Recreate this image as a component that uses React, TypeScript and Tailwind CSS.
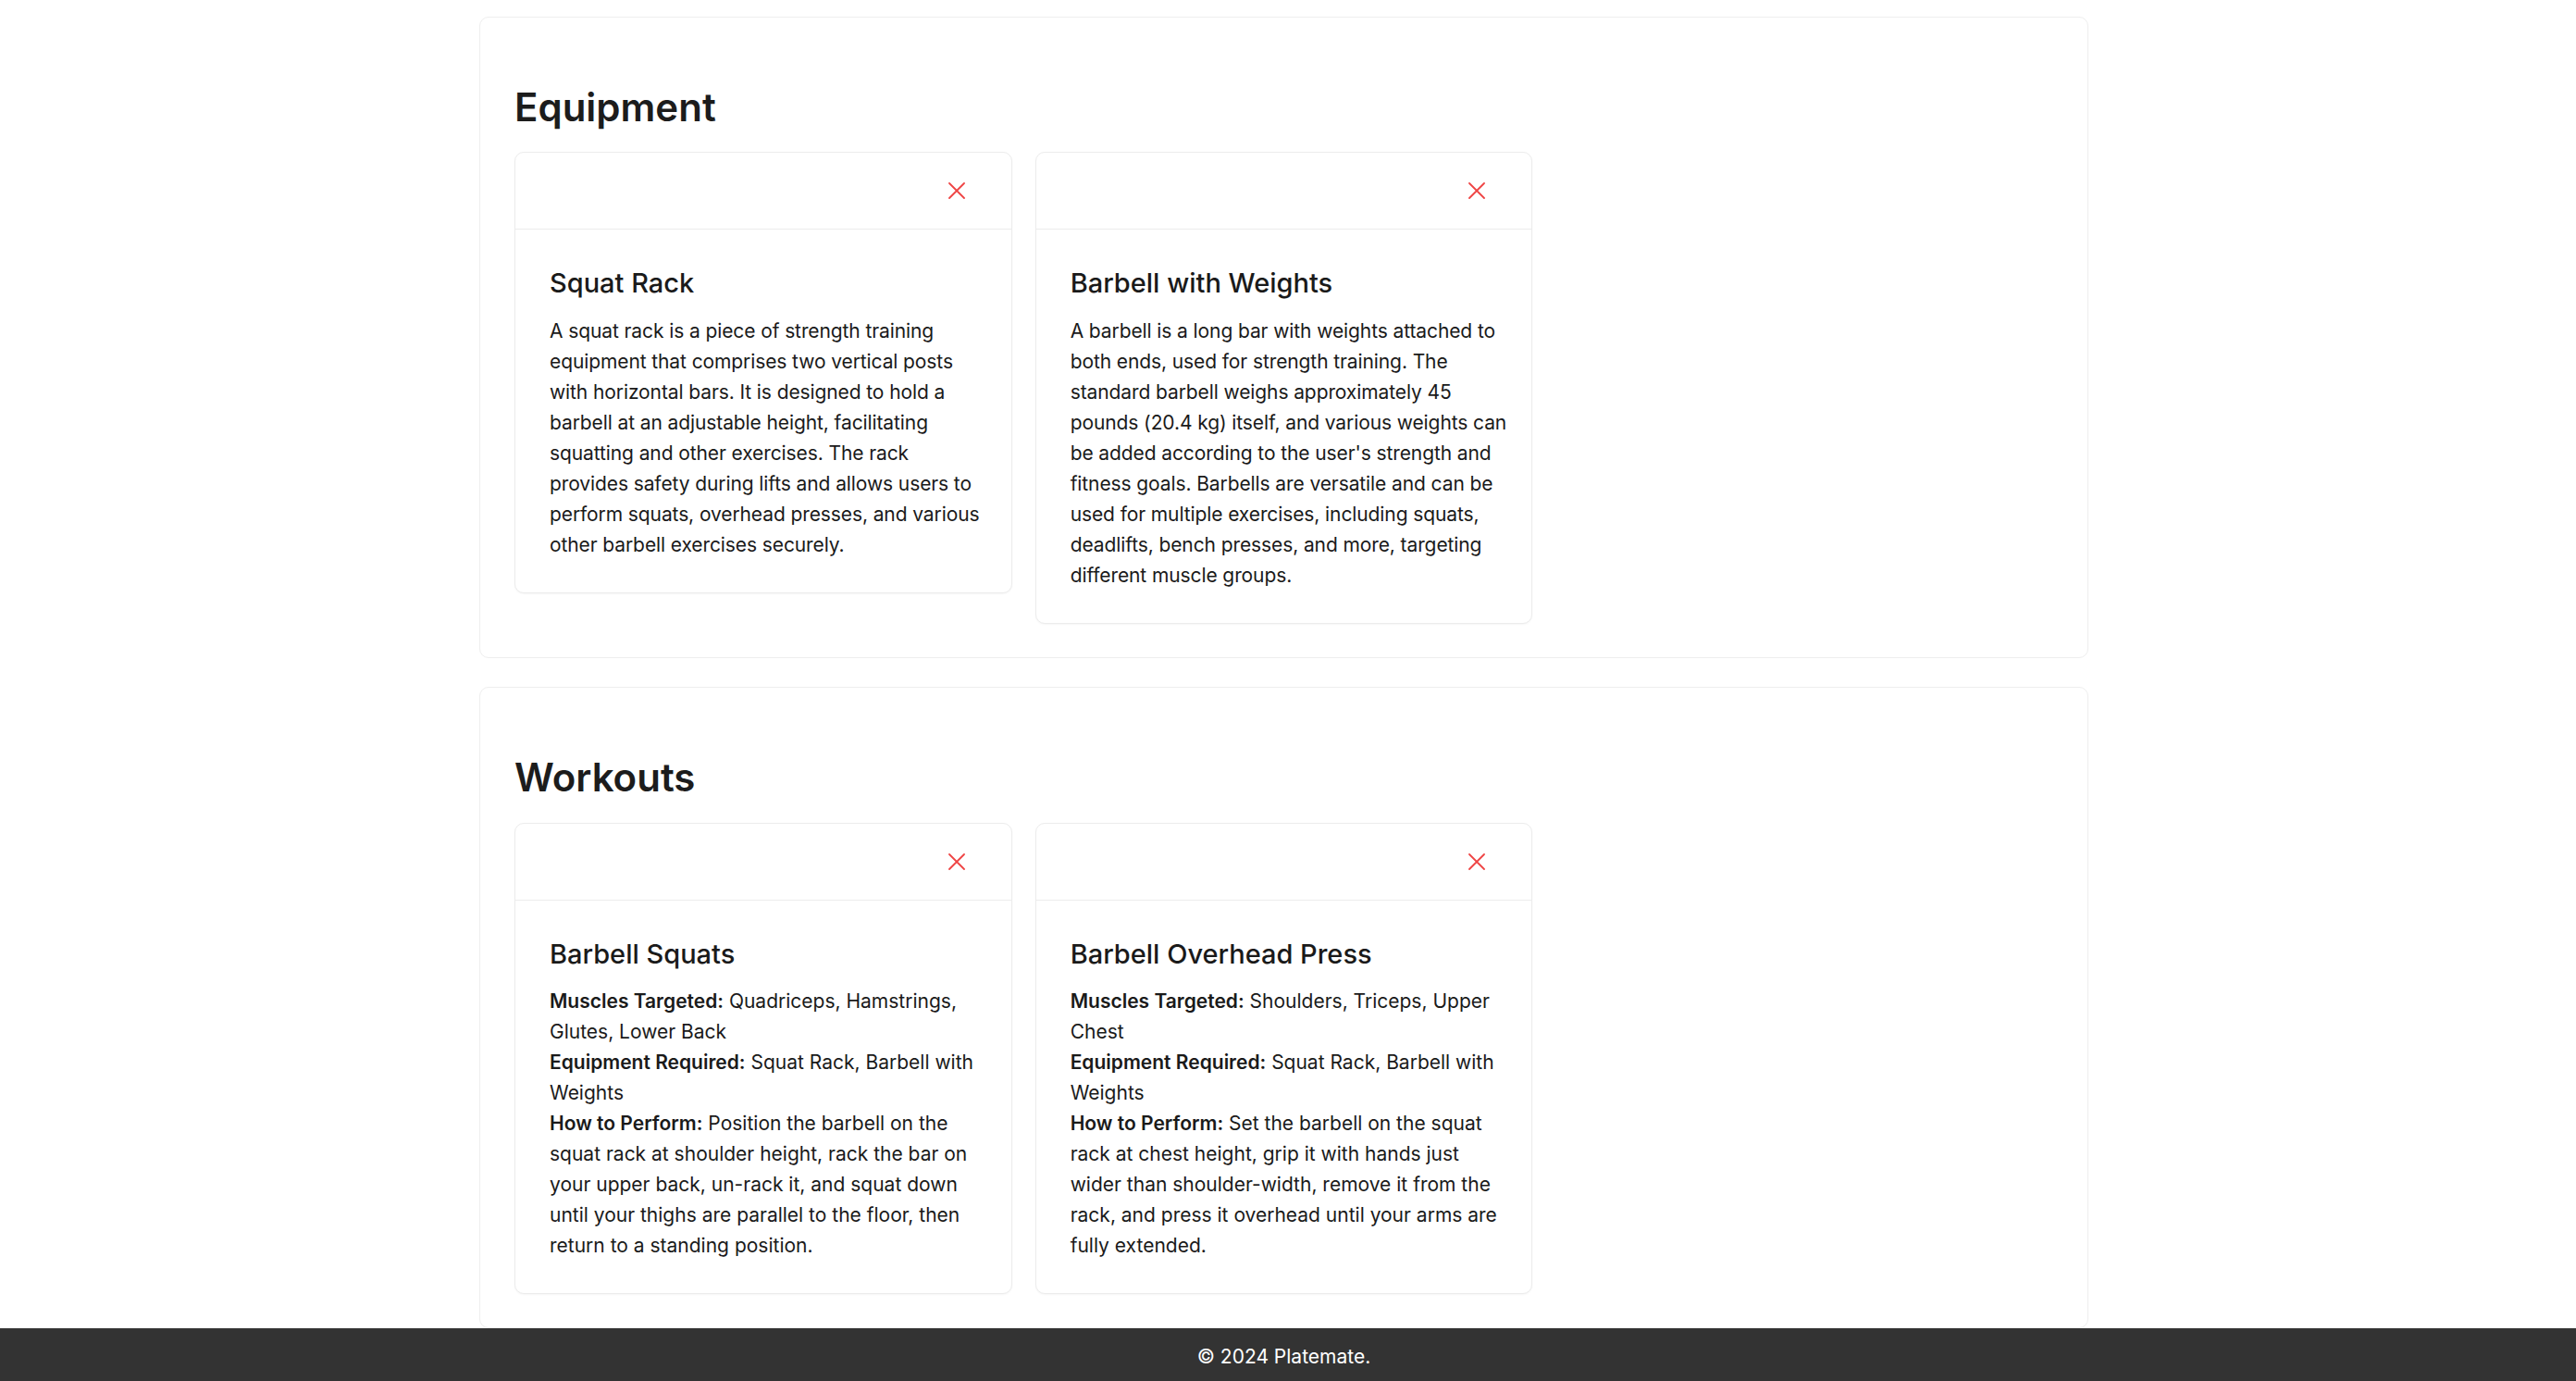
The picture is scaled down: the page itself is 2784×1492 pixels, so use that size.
import { Fragment } from 'react';

type Item = {
  title: string;
  lines?: string[];
  details?: { label: string; text: string }[];
};

// line breaks follow the reference layout
const equipment: Item[] = [
  {
    title: 'Squat Rack',
    lines: [
      'A squat rack is a piece of strength training',
      'equipment that comprises two vertical posts',
      'with horizontal bars. It is designed to hold a',
      'barbell at an adjustable height, facilitating',
      'squatting and other exercises. The rack',
      'provides safety during lifts and allows users to',
      'perform squats, overhead presses, and various',
      'other barbell exercises securely.',
    ],
  },
  {
    title: 'Barbell with Weights',
    lines: [
      'A barbell is a long bar with weights attached to',
      'both ends, used for strength training. The',
      'standard barbell weighs approximately 45',
      'pounds (20.4 kg) itself, and various weights can',
      "be added according to the user's strength and",
      'fitness goals. Barbells are versatile and can be',
      'used for multiple exercises, including squats,',
      'deadlifts, bench presses, and more, targeting',
      'different muscle groups.',
    ],
  },
];

const workouts: Item[] = [
  {
    title: 'Barbell Squats',
    details: [
      { label: 'Muscles Targeted:', text: 'Quadriceps, Hamstrings, Glutes, Lower Back' },
      { label: 'Equipment Required:', text: 'Squat Rack, Barbell with Weights' },
      {
        label: 'How to Perform:',
        text: 'Position the barbell on the squat rack at shoulder height, rack the bar on your upper back, un-rack it, and squat down until your thighs are parallel to the floor, then return to a standing position.',
      },
    ],
  },
  {
    title: 'Barbell Overhead Press',
    details: [
      { label: 'Muscles Targeted:', text: 'Shoulders, Triceps, Upper Chest' },
      { label: 'Equipment Required:', text: 'Squat Rack, Barbell with Weights' },
      {
        label: 'How to Perform:',
        text: 'Set the barbell on the squat rack at chest height, grip it with hands just wider than shoulder-width, remove it from the rack, and press it overhead until your arms are fully extended.',
      },
    ],
  },
];

function CloseIcon() {
  return (
    <svg width="18" height="18" viewBox="0 0 18 18" fill="none" stroke="#ef4444" strokeWidth="1.8" strokeLinecap="round">
      <path d="M1 1 17 17M17 1 1 17" />
    </svg>
  );
}

function ItemCard({ item }: { item: Item }) {
  return (
    <div className="bg-white border border-[#ececec] rounded-[10px] shadow-[0_1px_2px_rgba(0,0,0,0.04)]">
      <div className="h-[83px] flex items-center justify-end pr-[50px] border-b border-[#ececec]">
        <button className="flex items-center justify-center">
          <CloseIcon />
        </button>
      </div>
      <div className="pt-[41px] px-[37px] pb-[35px]">
        <h3 className="text-[29px] leading-[1.2] font-medium text-[#1a1a1a] mb-[17px]">{item.title}</h3>
        {item.lines && (
          <p className="text-[21px] leading-[33px] text-[#1a1a1a] tracking-[-0.1px]">
            {item.lines.map((line) => (
              <span key={line} className="block whitespace-nowrap">
                {line}
              </span>
            ))}
          </p>
        )}
        {item.details && (
          <p className="text-[21px] leading-[33px] text-[#1a1a1a]">
            {item.details.map((d, i) => (
              <Fragment key={d.label}>
                {i > 0 && <br />}
                <span className="font-semibold">{d.label}</span> {d.text}
              </Fragment>
            ))}
          </p>
        )}
      </div>
    </div>
  );
}

function Section({ title, items }: { title: string; items: Item[] }) {
  return (
    <section className="border border-[#eeeeee] rounded-[10px] bg-white pt-[72px] px-[37px] pb-[36px]">
      <h2 className="text-[42px] leading-[1.2] font-semibold text-[#1c1c1c] mb-[23px]">{title}</h2>
      <div className="grid grid-cols-3 gap-[25px] items-start">
        {items.map((item) => (
          <ItemCard key={item.title} item={item} />
        ))}
      </div>
    </section>
  );
}

export default function App() {
  return (
    <div className="min-h-screen bg-white font-['Inter','Noto_Sans',sans-serif]">
      <div className="pr-[9px]">
        <main className="w-[1739px] mx-auto pt-[18px] flex flex-col gap-[31px]">
          <Section title="Equipment" items={equipment} />
          <Section title="Workouts" items={workouts} />
        </main>
      </div>
      <footer className="h-[60px] pr-[9px] bg-[#333333] flex items-center justify-center">
        <p className="text-white text-[21px]">© 2024 Platemate.</p>
      </footer>
    </div>
  );
}
